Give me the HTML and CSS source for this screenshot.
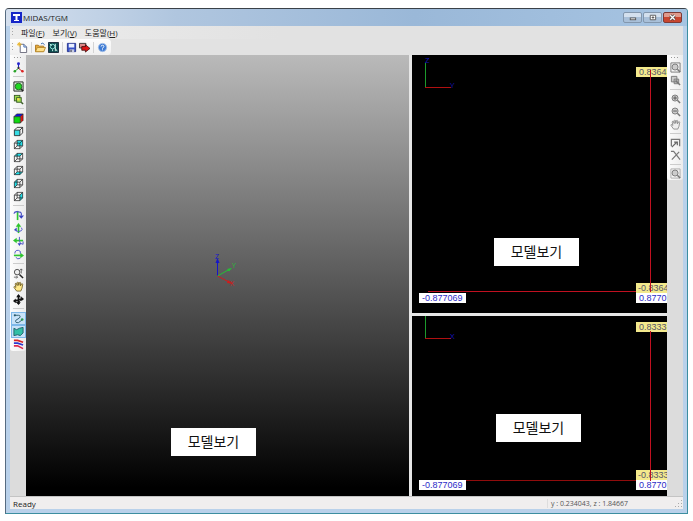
FILE: index.html
```html
<!DOCTYPE html>
<html lang="ko">
<head>
    <meta charset="UTF-8">
    <meta name="viewport" content="width=device-width, initial-scale=1.0">
    <title>MIDAS/TGM</title>
    <link rel="stylesheet" href="styles.css">
</head>
<body>
    <!-- Shared icon shapes -->
    <svg class="defs" width="0" height="0" aria-hidden="true">
        <symbol id="cube" viewBox="0 0 12 12">
            <path d="M1.5 4.5h6v6h-6zM4.5 1.5h6v6h-6zM1.5 4.5l3-3M7.5 4.5l3-3M7.5 10.5l3-3M1.5 10.5l3-3" fill="none" stroke="#222" stroke-width="0.8"/>
        </symbol>
        <symbol id="lens" viewBox="0 0 12 12">
            <path d="M8 8l3 3" stroke="currentColor" stroke-width="1.6"/>
            <circle cx="5.5" cy="5.5" r="3.3" fill="#ccc" stroke="currentColor"/>
        </symbol>
        <symbol id="hand" viewBox="0 0 12 12">
            <path d="M4 11L1.2 7.2Q.6 6 1.8 6l1.4 1L2.4 3.4q0-1.2 1.2-.8L4.6 5 4.5 1.8q.5-1.2 1.4-.2L6.3 4.8 7 1.8q.9-1 1.4.2L8.2 5.2l1.1-2q1.2-.7 1.3.5L9.8 8 8.5 11z" fill="var(--palm)" stroke="currentColor" stroke-width="0.8"/>
        </symbol>
        <symbol id="zoom-window" viewBox="0 0 12 12">
            <rect x="1.5" y="1.5" width="6" height="6" fill="var(--win)" stroke="currentColor"/>
            <path d="M9 9l2 2" stroke="currentColor" stroke-width="1.6"/>
            <rect x="4" y="4" width="5" height="5" fill="var(--win)" stroke="currentColor"/>
            <rect x="4.5" y="4.5" width="2.5" height="2.5" fill="#f4e04c"/>
        </symbol>
    </svg>

    <div class="window">
        <div class="titlebar">
            <svg class="logo" viewBox="0 0 11 11"><path d="M0 0h11v11H0z" fill="#1626c8"/><path d="M2 2h7v2H6.500v4H8v1H3V8h1.500V4H2z" fill="#fff"/></svg>
            <span class="title">MIDAS/TGM</span>
            <button class="win-btn" aria-label="Minimize"><svg viewBox="0 0 18 10"><rect x="6.500" y="5.500" width="6" height="2" fill="#fff" stroke="#555"/></svg></button>
            <button class="win-btn" aria-label="Maximize"><svg viewBox="0 0 18 10"><path d="M6.500 2.500h6v5h-6z" fill="#fff" stroke="#555"/><path d="M8.500 4.500h2v1h-2z" fill="#888" stroke="#555"/></svg></button>
            <button class="win-btn close" aria-label="Close"><svg viewBox="0 0 18 10"><path d="M6.500 2.500l5 5M11.500 2.500l-5 5" stroke="#444" stroke-width="3"/><path d="M6.500 2.500l5 5M11.500 2.500l-5 5" stroke="#fff" stroke-width="1.500"/></svg></button>
        </div>

        <div class="client">
            <nav class="menu">
                <span class="grip"></span>
                <button>파일(<u>F</u>)</button>
                <button>보기(<u>V</u>)</button>
                <button>도움말(<u>H</u>)</button>
            </nav>

            <div class="toolbar">
                <span class="grip"></span>
                <button class="tool" aria-label="New"><svg viewBox="0 0 12 12"><path d="M3.500 2.500h4l3 3v6h-7z" fill="#fff" stroke="#667"/><path d="M7.500 2.500v3h3" fill="none" stroke="#3c6cb8"/><path d="M2.500 0v5M0 2.500h5M1 1l3 3M4 1L1 4" stroke="#e9b52c"/></svg></button>
                <span class="sep"></span>
                <button class="tool" aria-label="Open"><svg viewBox="0 0 12 12"><path d="M.5 10.500v-7h3l1 1h5v6z" fill="#e7a93a" stroke="#a7741e"/><path d="M.5 10.500l2-4.500h9l-2 4.500z" fill="#ffe08a" stroke="#b98a2d"/><path d="M6.500 2q2-2 4 1" fill="none" stroke="#36a"/></svg></button>
                <button class="tool" aria-label="Import"><svg viewBox="0 0 12 12"><path d="M.5.500h11v11H.5z" fill="#0b4b4e" stroke="#123"/><circle cx="5" cy="5" r="2.500" fill="none" stroke="#8eeadf"/><path d="M2 2l2 2M8 2v8M5 8v2M8 7l2 3" stroke="#d8f5f0"/></svg></button>
                <span class="sep"></span>
                <button class="tool" aria-label="Save"><svg viewBox="0 0 12 12"><path d="M1.500 1.500h9v9h-9z" fill="#3752c8" stroke="#24328c"/><path d="M3 2h6v4H3z" fill="#e8efff"/><path d="M4 8h5v3H4z" fill="#c6cbe0"/><path d="M5 8.500h1V11H5z" fill="#223"/></svg></button>
                <button class="tool" aria-label="Export"><svg viewBox="0 0 12 12"><path d="M.5 1.500h7v5h-7z" fill="#d88" stroke="#333"/><path d="M3 5h4V3l5 4-5 4V9H3z" fill="#e01515" stroke="#300" stroke-width="0.8"/></svg></button>
                <span class="sep"></span>
                <button class="tool" aria-label="Help"><svg viewBox="0 0 12 12"><circle cx="6" cy="6" r="4.500" fill="#3e7bd4" stroke="#a3c0e8"/><path d="M4.500 5q0-1.500 1.500-1.500T7.500 5Q7.500 6 6 6.500v.7M6 8v1" fill="none" stroke="#fff"/></svg></button>
            </div>

            <div class="main">
                <div class="side">
                    <div class="strip left">
                        <span class="grip wide"></span>
                        <button class="tool" aria-label="Axes"><svg viewBox="0 0 12 12"><path d="M6 7V2" stroke="#22c" stroke-width="1.200"/><path d="M6 7l-4 3" stroke="#2a2"/><path d="M6 7l4 3" stroke="#c22"/><circle cx="6" cy="2" r="1.600" fill="#22c"/><circle cx="2" cy="10" r="1.400" fill="#29a329"/><circle cx="10.300" cy="10" r="1.400" fill="#d22"/><circle cx="6" cy="6.500" r="1.200" fill="#333"/></svg></button>
                        <span class="sep"></span>
                        <button class="tool" aria-label="Zoom all"><svg viewBox="0 0 12 12"><path d="M1 1h10v10H1z" fill="#d9ead6" stroke="#222"/><path d="M8 8l3 3" stroke="#222" stroke-width="1.500"/><circle cx="6" cy="6" r="3.600" fill="#20d820" stroke="#246824"/></svg></button>
                        <button class="tool zw" aria-label="Zoom window"><svg><use href="#zoom-window"/></svg></button>
                        <span class="sep"></span>
                        <button class="tool" aria-label="Isometric view"><svg viewBox="0 0 12 12"><path d="M1 4l3-3h7L8 4z" fill="#1414d8"/><path d="M8 4l3-3v7l-3 3z" fill="#e01414"/><path d="M1 4h7v7H1z" fill="#10d810"/><path d="M1 4h7v7H1zM1 4l3-3h7v7l-3 3M8 4l3-3" fill="none" stroke="#222" stroke-width="0.7"/></svg></button>
                        <button class="tool" aria-label="Front view"><svg viewBox="0 0 12 12"><path d="M1.500 4.500h6v6h-6z" fill="#36dce4"/><path d="M1.500 4.500h6v6h-6zM1.500 4.500l3-3h6v6l-3 3M7.500 4.500l3-3" fill="none" stroke="#222" stroke-width="0.9"/></svg></button>
                        <button class="tool" aria-label="Back view"><svg viewBox="0 0 12 12"><path d="M4.500 1.500h6v6h-6z" fill="#1fe0ea"/><use href="#cube"/></svg></button>
                        <button class="tool" aria-label="Top view"><svg viewBox="0 0 12 12"><path d="M1.500 4.500l3-3h6l-3 3z" fill="#1fe0ea"/><use href="#cube"/></svg></button>
                        <button class="tool" aria-label="Bottom view"><svg viewBox="0 0 12 12"><path d="M1.500 10.500l3-3h6l-3 3z" fill="#1fe0ea"/><use href="#cube"/></svg></button>
                        <button class="tool" aria-label="Left view"><svg viewBox="0 0 12 12"><path d="M1.500 4.500l3-3v6l-3 3z" fill="#1fe0ea"/><use href="#cube"/></svg></button>
                        <button class="tool" aria-label="Right view"><svg viewBox="0 0 12 12"><path d="M7.500 4.500l3-3v6l-3 3z" fill="#1fe0ea"/><use href="#cube"/></svg></button>
                        <span class="sep"></span>
                        <button class="tool" aria-label="Rotate right"><svg viewBox="0 0 12 12"><path d="M5 1v10" stroke="#2fc52f" stroke-width="1.800"/><path d="M1 4q1-3 5-2 4 0 3 4" fill="none" stroke="#4a52c8" stroke-width="1.300"/><path d="M6 6h6L9 9.500z" fill="#3640c0"/></svg></button>
                        <button class="tool" aria-label="Rotate left"><svg viewBox="0 0 12 12"><path d="M6 3v8" stroke="#2fc52f" stroke-width="1.800"/><path d="M3 4l3-4 3 4z" fill="#2fc52f"/><path d="M9 5q2 2 0 3.500-3 1.500-6 0" fill="none" stroke="#4a52c8"/><path d="M4 5v4L1 7.500z" fill="#3640c0"/></svg></button>
                        <button class="tool" aria-label="Rotate up"><svg viewBox="0 0 12 12"><path d="M2 5h9" stroke="#2fc52f" stroke-width="1.800"/><path d="M4 2v6L0 5z" fill="#2fc52f"/><path d="M7 1v4q0 4 4 4V6" fill="none" stroke="#4a52c8"/><path d="M5 8h4l-2 3z" fill="#3640c0"/></svg></button>
                        <button class="tool" aria-label="Rotate down"><svg viewBox="0 0 12 12"><path d="M1 7h8" stroke="#2fc52f" stroke-width="1.800"/><path d="M8 4v6l4-3z" fill="#2fc52f"/><path d="M2 5q0-4 4-3.500Q9 2 8 5M3 9q2 3 5 1" fill="none" stroke="#4a52c8"/></svg></button>
                        <span class="sep"></span>
                        <button class="tool" aria-label="Dynamic zoom"><svg viewBox="0 0 12 12"><path d="M7 7l4 4" stroke="#222" stroke-width="1.600"/><circle cx="4.500" cy="4.500" r="3" fill="#eee" stroke="#444"/><path d="M9 1v5M7.500 2.500L9 1l1.500 1.500M1 10h4M3.500 8.500L5 10l-1.500 1.500" fill="none" stroke="#444" stroke-width="0.8"/></svg></button>
                        <button class="tool pan" aria-label="Pan"><svg><use href="#hand"/></svg></button>
                        <button class="tool" aria-label="Dynamic rotate"><svg viewBox="0 0 12 12"><path d="M6 1v10M2 7.500l8-2" stroke="#111" stroke-width="1.800"/><path d="M3.500 3.500L6 0l2.500 3.500zM3.500 9L6 12l2.500-3zM3 5v5L0 7.500zM9 3v5l3-2.500z" fill="#111"/><path d="M3 9q6 1 6-6" fill="none" stroke="#111"/></svg></button>
                        <span class="sep"></span>
                        <button class="tool on" aria-label="Show curves"><svg viewBox="0 0 12 12"><path d="M2 2.500h4q3 0 1 3L3 8q-1 3 3 2.500l4-3" fill="none" stroke="#285a6a"/><circle cx="2" cy="2.500" r="1.200" fill="#285a6a"/><circle cx="10" cy="7" r="1.400" fill="#2c9a50"/></svg></button>
                        <button class="tool on" aria-label="Show surfaces"><svg viewBox="0 0 12 12"><path d="M1 2.500l3 1.500 3-1.500 4-1v6l-3 3-3-1-4 1z" fill="#32bfa6" stroke="#22606a"/></svg></button>
                        <button class="tool" aria-label="Show layers"><svg viewBox="0 0 12 12"><g fill="none" stroke-width="1.800"><path d="M1 1.500h4l6 2" stroke="#d82424"/><path d="M1 4.500h4l6 2" stroke="#2a38d0"/><path d="M1 7.500h4l6 3" stroke="#dc2c50"/></g></svg></button>
                    </div>
                </div>

                <div class="view model">
                    <svg class="triad" width="28" height="48" viewBox="0 0 28 48">
                        <path d="M7.500 24V9" stroke="#1616c8"/><path d="M5.500 11l2-5 2 5z" fill="#1616c8"/>
                        <path d="M7.500 24L20 17" stroke="#23c135"/><path d="M17 17l5-1-3 3.500z" fill="#23c135"/>
                        <path d="M7.500 24L19 30" stroke="#d01c1c"/><path d="M18 28l5 4-6-1z" fill="#d01c1c"/>
                        <text x="5" y="7" fill="#1616c8">Z</text>
                        <text x="22" y="16" fill="#23c135">Y</text>
                        <text x="20" y="34" fill="#d01c1c">X</text>
                    </svg>
                    <div class="caption">모델보기</div>
                </div>

                <div class="views">
                    <div class="view section upper">
                        <div class="line-h"></div>
                        <svg class="axes" width="36" height="38" viewBox="0 0 36 38">
                            <path d="M3.500 8v25" stroke="#1c9a2c"/><path d="M3 32.500h26" stroke="#b01010"/>
                            <text x="3" y="8">Z</text><text x="28" y="33">Y</text>
                        </svg>
                        <span class="value yellow top">0.8364</span>
                        <span class="value min">-0.877069</span>
                        <span class="value yellow low">-0.8364</span>
                        <span class="value max">0.8770</span>
                        <div class="line-v"></div>
                        <div class="caption">모델보기</div>
                    </div>
                    <div class="view section lower">
                        <div class="line-h"></div>
                        <svg class="axes" width="36" height="38" viewBox="0 0 36 38">
                            <path d="M3.500 8v25" stroke="#1c9a2c"/><path d="M3 32.500h26" stroke="#b01010"/>
                            <text x="28" y="33">X</text>
                        </svg>
                        <span class="value yellow top">0.8333</span>
                        <span class="value min">-0.877069</span>
                        <span class="value yellow low">-0.8333</span>
                        <span class="value max">0.8770</span>
                        <div class="line-v"></div>
                        <div class="caption">모델보기</div>
                    </div>
                </div>

                <div class="side">
                    <div class="strip right">
                        <span class="grip wide"></span>
                        <button class="tool" aria-label="Zoom all, section"><svg viewBox="0 0 12 12"><path d="M1 1h10v10H1z" fill="none" stroke="#777"/><use href="#lens"/></svg></button>
                        <button class="tool" aria-label="Zoom window, section"><svg viewBox="0 0 12 12"><path d="M1.500 1.500h6v6h-6zM4.500 4.500h5v5h-5z" fill="#ccc" stroke="#777"/><path d="M6 6l5 5" stroke="#777" stroke-width="1.600"/></svg></button>
                        <span class="sep"></span>
                        <button class="tool" aria-label="Zoom in"><svg viewBox="0 0 12 12"><use href="#lens"/><path d="M3.500 5.500h4M5.500 3.500v4" stroke="#555"/></svg></button>
                        <button class="tool" aria-label="Zoom out"><svg viewBox="0 0 12 12"><use href="#lens"/><path d="M3.500 5.500h4" stroke="#555"/></svg></button>
                        <button class="tool" aria-label="Pan section"><svg><use href="#hand"/></svg></button>
                        <span class="sep"></span>
                        <button class="tool" aria-label="Pick"><svg viewBox="0 0 12 12"><path d="M1.500 10V2.500h9V10" fill="none" stroke="#777" stroke-width="1.400"/><path d="M2 11l5-5M4.500 5.500H8V9" fill="none" stroke="#666" stroke-width="1.300"/></svg></button>
                        <button class="tool" aria-label="Delete"><svg viewBox="0 0 12 12"><path d="M1 1.500h3l7 9M10 2L2 10.500" fill="none" stroke="#777" stroke-width="1.300"/></svg></button>
                        <span class="sep"></span>
                        <button class="tool" aria-label="Find"><svg viewBox="0 0 12 12"><path d="M1 1h10v10H1z" fill="none" stroke="#aaa"/><use href="#lens"/></svg></button>
                    </div>
                </div>
            </div>

            <div class="status">
                <span class="ready">Ready</span>
                <span class="coords">y : 0.234043, z : 1.84667</span>
                <svg class="resize" viewBox="0 0 10 10"><path d="M8 2h1v1H8zM8 5h1v1H8zM8 8h1v1H8zM5 5h1v1H5zM5 8h1v1H5zM2 8h1v1H2z" fill="#aaa"/></svg>
            </div>
        </div>
    </div>
</body>
</html>
```

FILE: styles.css
```css
* {
    box-sizing: border-box;
}
body {
    margin: 0;
    padding: 8px 5px 7px;
    height: 100vh;
    display: flex;
    background-color: #fff;
    font-family: "Open Sans", "Noto Sans CJK KR", sans-serif;
    font-size: 8px;
    color: #222;
}
button {
    margin: 0;
    padding: 0;
    border: none;
    background: none;
    font: inherit;
    color: inherit;
}
.defs {
    position: absolute;
}
.window {
    flex: 1;
    min-width: 0;
    display: flex;
    flex-direction: column;
    padding: 0 4px 4px;
    border: 1px solid #3c8ea0;
    border-top-color: #3a4148;
    border-left-color: #566b80;
    border-radius: 4px 4px 0 0;
    background-color: #b9d1ea;
}

/* Title bar */
.titlebar {
    flex: none;
    height: 17px;
    display: flex;
    align-items: center;
    gap: 1px;
    margin: 0 -4px;
    padding: 0 5px;
    border-radius: 3px 3px 0 0;
    background: linear-gradient(to right, #d5e0ee, #b0c6df 25%, #9ab8d8 60%, #a6c4e2);
}
.logo {
    width: 11px;
    height: 11px;
}
.title {
    flex: 1;
}
.win-btn {
    width: 19px;
    height: 11px;
    display: flex;
    border: 1px solid #8397ad;
    border-radius: 2px;
    background: linear-gradient(#d3e0ee 50%, #a9c0d9 50%);
}
.win-btn svg {
    width: 100%;
    height: 100%;
}
.win-btn.close {
    border-color: #7d3a35;
    background: linear-gradient(#e09a8c 50%, #c8452f 50%);
}

.client {
    flex: 1;
    min-height: 0;
    display: flex;
    flex-direction: column;
    background-color: #e2e2e2;
}

/* Menu and top toolbar */
.menu {
    flex: none;
    height: 13px;
    display: flex;
    align-items: center;
    gap: 8px;
    padding-left: 2px;
    background: linear-gradient(to right, #ececec, #e2e2e2 40%);
}
.grip {
    width: 1px;
    height: 9px;
    background: repeating-linear-gradient(#aaa 0 1px, transparent 1px 3px);
}
.grip.wide {
    flex: none;
    width: 9px;
    height: 1px;
    margin: 2px 0 3px;
    background: repeating-linear-gradient(to right, #999 0 1px, transparent 1px 3px);
}
.toolbar {
    flex: none;
    align-self: flex-start;
    height: 16px;
    display: flex;
    align-items: center;
    padding: 0 2px;
    border-radius: 0 4px 4px 0;
    background: linear-gradient(#fdfdfd, #f0f0f0);
}
.toolbar .grip {
    margin-right: 3px;
}
.toolbar .sep {
    width: 1px;
    height: 11px;
    margin: 0 2px;
    background-color: #d4d4d4;
}
.tool {
    flex: none;
    width: 13px;
    height: 13px;
    display: flex;
    align-items: center;
    justify-content: center;
    color: #777;
    --palm: #eee;
    --win: #9bdc4c;
}
.tool svg {
    width: 11px;
    height: 11px;
}
.tool.zw {
    color: #3a5c28;
}
.tool.pan {
    color: #5c4a10;
    --palm: #ffe98a;
}
.tool.on {
    width: 15px;
    border: 1px solid #7db8ea;
    background-color: #c8e2f8;
}

/* Work area */
.main {
    flex: 1;
    min-height: 0;
    display: flex;
}
.side {
    flex: none;
    width: 16px;
    background-color: #dcdcdc;
}
.strip {
    display: flex;
    flex-direction: column;
    align-items: center;
    border-radius: 0 0 3px 3px;
    background: linear-gradient(to right, #fdfdfd, #ececec);
}
.strip .sep {
    width: 11px;
    height: 1px;
    margin: 2px 0;
    background-color: #ccc;
}
.strip.left .sep {
    margin-bottom: 3px;
}
.view {
    position: relative;
    overflow: hidden;
}
.model {
    flex: 383;
    background: linear-gradient(#bababa, #000 98%);
}
.views {
    flex: 255;
    display: flex;
    flex-direction: column;
    gap: 3px;
    padding-left: 3px;
    background-color: #e6e6e6;
}
.section {
    background-color: #000;
}
.upper {
    flex: 258;
}
.lower {
    flex: 180;
}

/* Drawings and labels over the views */
.triad {
    position: absolute;
    left: calc(50% - 8px);
    top: calc(50% - 24px);
}
.triad text {
    font-size: 7px;
}
.axes {
    position: absolute;
    left: 10px;
    top: 0;
}
.axes text {
    font-size: 8px;
    fill: #1414b8;
}
.lower .axes {
    top: -10px;
}
.line-v {
    position: absolute;
    right: 16px;
    top: 15px;
    bottom: 21px;
    width: 1px;
    background-color: #c01020;
}
.line-h {
    position: absolute;
    left: 16px;
    right: 0;
    bottom: 21px;
    height: 1px;
    background-color: #c01020;
}
.lower .line-h {
    bottom: 15px;
    background-color: #900c0c;
}
.lower .line-v {
    bottom: 15px;
}
.value {
    position: absolute;
    height: 10px;
    padding: 0 3px;
    background-color: #fff;
    color: #2c2cc8;
    font-family: "Liberation Sans", Arial, sans-serif;
    font-size: 9px;
    line-height: 11px;
    white-space: nowrap;
}
.value.yellow {
    background-color: #f3e98c;
    color: #55556a;
}
.value.top,
.value.low,
.value.max {
    right: 0;
    width: 31px;
    padding-right: 0;
}
.value.low {
    padding-left: 2px;
}
.value.top {
    top: 12px;
}
.value.min {
    left: 7px;
    bottom: 10px;
}
.value.low {
    bottom: 20px;
}
.value.max {
    bottom: 10px;
}
.lower .top {
    top: 6px;
}
.lower .min,
.lower .max {
    bottom: 6px;
}
.lower .low {
    bottom: 16px;
}
.caption {
    position: absolute;
    left: 145px;
    bottom: 40px;
    width: 85px;
    height: 28px;
    background-color: #fff;
    color: #111;
    font-family: "Noto Sans CJK KR", sans-serif;
    font-size: 14px;
    line-height: 27px;
    text-align: center;
}
.section .caption {
    left: 82px;
    bottom: 47px;
}
.lower .caption {
    left: 84px;
    bottom: 54px;
}

/* Status bar */
.status {
    flex: none;
    height: 13px;
    display: flex;
    align-items: center;
    padding-left: 3px;
    border-top: 1px solid #c4c4c4;
    background-color: #f0eeee;
}
.ready {
    flex: 1;
}
.coords {
    width: 126px;
    padding-left: 3px;
    border-left: 1px solid #ddd;
    color: #555;
    font-size: 7px;
}
.resize {
    width: 10px;
    height: 10px;
}
```
